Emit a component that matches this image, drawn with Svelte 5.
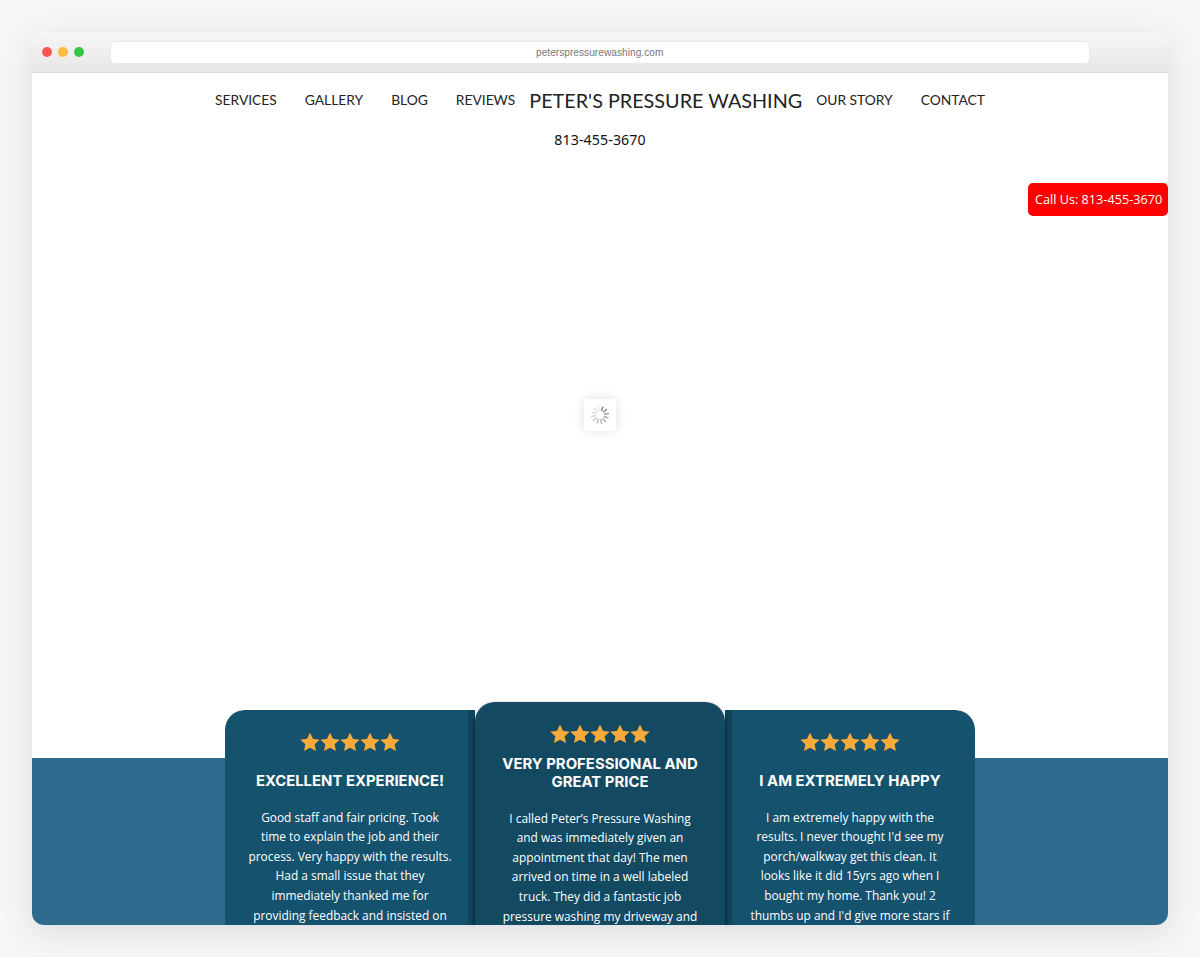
<script>
  const navLeft = ['SERVICES', 'GALLERY', 'BLOG', 'REVIEWS'];
  const navRight = ['OUR STORY', 'CONTACT'];
  const reviews = [
    {
      title: 'EXCELLENT EXPERIENCE!',
      kind: 'side',
      lines: ['Good staff and fair pricing. Took', 'time to explain the job and their', 'process. Very happy with the results.', 'Had a small issue that they', 'immediately thanked me for', 'providing feedback and insisted on']
    },
    {
      title: 'VERY PROFESSIONAL AND GREAT PRICE',
      kind: 'mid',
      lines: ['I called Peter’s Pressure Washing', 'and was immediately given an', 'appointment that day! The men', 'arrived on time in a well labeled', 'truck. They did a fantastic job', 'pressure washing my driveway and']
    },
    {
      title: 'I AM EXTREMELY HAPPY',
      kind: 'side',
      lines: ['I am extremely happy with the', 'results. I never thought I\'d see my', 'porch/walkway get this clean. It', 'looks like it did 15yrs ago when I', 'bought my home. Thank you! 2', 'thumbs up and I\'d give more stars if']
    }
  ];
  const stars = [0, 1, 2, 3, 4];
  const spokes = Array.from({ length: 12 }, (_, i) => i);
</script>

<div class="page">
  <div class="window">
    <header class="chrome">
      <div class="dots">
        <span class="dot red"></span>
        <span class="dot yellow"></span>
        <span class="dot green"></span>
      </div>
      <div class="url">peterspressurewashing.com</div>
    </header>

    <div class="viewport">
      <nav class="nav">
        {#each navLeft as label}
          <a class="link" href="#top">{label}</a>
        {/each}
        <a class="brand" href="#top">PETER'S PRESSURE WASHING</a>
        {#each navRight as label}
          <a class="link" href="#top">{label}</a>
        {/each}
      </nav>
      <div class="phone">813-455-3670</div>

      <div class="hero"></div>

      <section class="band">
        <div class="cards">
          {#each reviews as r}
            <article class="card {r.kind}">
              <div class="stars">
                {#each stars as s}
                  <svg class="star" viewBox="1 1 22 22" aria-hidden="true">
                    <path d="M12 1.6l3.2 6.9 7.5.9-5.6 5.1 1.5 7.4L12 18.2l-6.6 3.7 1.5-7.4L1.3 9.4l7.5-.9z" />
                  </svg>
                {/each}
              </div>
              <h3>{r.title}</h3>
              <p>
                {#each r.lines as line}
                  <span class="line">{line}</span>
                {/each}
              </p>
            </article>
          {/each}
        </div>
      </section>

      <a class="call" href="#top">Call Us: 813-455-3670</a>

      <div class="loader">
        <svg viewBox="0 0 20 20" width="20" height="20" aria-hidden="true">
          {#each spokes as i}
            <line
              x1="10"
              y1="1.5"
              x2="10"
              y2="5.5"
              stroke="#666"
              stroke-width="1.3"
              stroke-linecap="round"
              opacity={0.85 - i * 0.065}
              transform="rotate({20 + i * 30} 10 10)"
            />
          {/each}
        </svg>
      </div>
    </div>
  </div>
</div>

<style>
  :global(body) {
    margin: 0;
    background: #f5f6f8;
  }
  .page {
    height: 957px;
    box-sizing: border-box;
    padding: 32px 31.7px;
    overflow: hidden;
  }
  .window {
    height: 893px;
    border-radius: 12px;
    overflow: hidden;
    display: flex;
    flex-direction: column;
    box-shadow: 0 8px 32px rgba(0, 0, 0, 0.1);
    background: #fff;
  }
  .chrome {
    height: 41px;
    flex: none;
    box-sizing: border-box;
    background: linear-gradient(#f6f6f6, #e7e7e7);
    border-bottom: 1px solid #dcdcdc;
    display: flex;
    align-items: center;
    padding-left: 10.3px;
  }
  .dots {
    display: flex;
    gap: 6px;
    width: 68.7px;
    flex: none;
  }
  .dot {
    width: 10px;
    height: 10px;
    border-radius: 50%;
  }
  .red { background: #fc5753; }
  .yellow { background: #fdbc40; }
  .green { background: #33c748; }
  .url {
    width: 978px;
    height: 21px;
    background: #fff;
    border-radius: 4px;
    box-shadow: 0 0 0 1px #e9e9e9;
    font: 10.2px/21px "Liberation Sans", Arial, sans-serif;
    color: #777;
    text-align: center;
  }
  .viewport {
    position: relative;
    flex: 1;
    overflow: hidden;
    background: #fff;
  }
  .nav {
    display: flex;
    align-items: center;
    justify-content: center;
    height: 53px;
    font-family: Lato, "Noto Sans", sans-serif;
  }
  .link {
    font-size: 13.8px;
    color: #222;
    text-decoration: none;
    white-space: nowrap;
    padding: 0 14px;
  }
  .brand {
    font-size: 19.8px;
    color: #222;
    text-decoration: none;
    white-space: nowrap;
    margin-top: 1px;
    text-align: center;
  }
  .phone {
    text-align: center;
    font: 14.2px/20px "Noto Sans", "Open Sans", sans-serif;
    color: #111;
    letter-spacing: 0.1px;
    margin-top: 4px;
  }
  .hero {
    height: 608px;
  }
  .band {
    height: 167px;
    background: #2e6a8e;
    display: flex;
    justify-content: center;
    align-items: flex-start;
  }
  .cards {
    display: flex;
    width: 750px;
    flex: none;
    margin-top: -48px;
  }
  .card {
    width: 250px;
    height: 300px;
    box-sizing: border-box;
    color: #fff;
    text-align: center;
    background: #14526e;
    position: relative;
  }
  .card:first-child {
    border-top-left-radius: 20px;
  }
  .card:last-child {
    border-top-right-radius: 20px;
  }
  .card.side {
    padding: 22px 18px 0;
  }
  .card:first-child::after,
  .card:last-child::before {
    content: "";
    position: absolute;
    top: 0;
    bottom: 0;
    width: 7px;
    background: #0f435c;
  }
  .card:first-child::after { right: 0; }
  .card:last-child::before { left: 0; }
  .card.mid {
    background: #134a62;
    margin-top: -8px;
    height: 308px;
    padding: 22px 18px 0;
    border-radius: 20px 20px 0 0;
    z-index: 1;
    box-shadow: 0 2px 4px rgba(0, 0, 0, 0.6);
  }
  .stars {
    display: flex;
    justify-content: center;
    height: 20px;
  }
  .star {
    width: 20px;
    height: 20px;
    fill: #f7a93a;
  }
  h3 {
    margin: 11px 0 0;
    font: 700 14.9px/18px Inter, "Noto Sans", sans-serif;
    color: #fff;
  }
  .side h3 {
    margin-top: 20px;
  }
  p {
    margin: 17.6px 0 0;
    font: 11.9px/19.6px "Open Sans", "Noto Sans", sans-serif;
    color: #fff;
  }
  .line {
    display: block;
    white-space: nowrap;
  }
  .call {
    position: absolute;
    top: 110px;
    right: 0;
    height: 33px;
    box-sizing: border-box;
    padding: 0 6px 0 6.5px;
    background: #f00;
    color: #fff;
    border-radius: 5px;
    font: 12.7px/33px "Open Sans", sans-serif;
    text-decoration: none;
    white-space: nowrap;
  }
  .loader {
    position: absolute;
    left: 552.3px;
    top: 326px;
    width: 32px;
    height: 32px;
    display: flex;
    align-items: center;
    justify-content: center;
    background: #fff;
    box-shadow: 0 0 12px rgba(0, 0, 0, 0.12);
  }
</style>
